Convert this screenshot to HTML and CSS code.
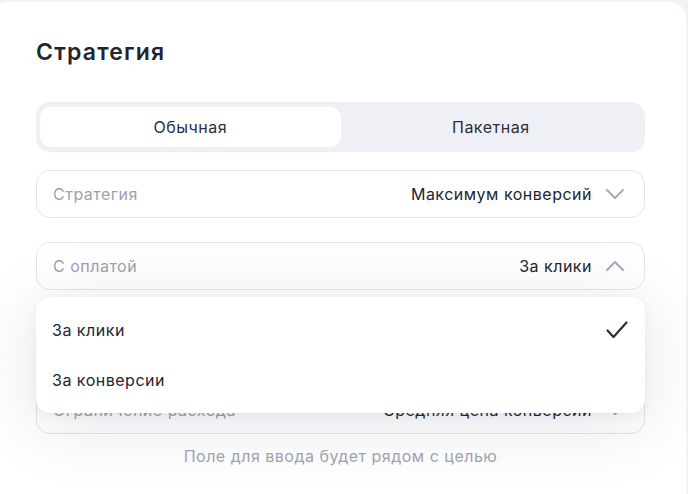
FILE: index.html
```html
<!DOCTYPE html>
<html lang="ru">
<head>
<meta charset="utf-8">
<title>Стратегия</title>
<link rel="stylesheet" href="styles.css">
</head>
<body>
<div class="card">
  <h1 class="title">Стратегия</h1>
  <div class="segmented">
    <div class="seg seg-active">Обычная</div>
    <div class="seg">Пакетная</div>
  </div>
  <div class="fields">
    <div class="field">
      <span class="label">Стратегия</span>
      <span class="value">Максимум конверсий</span>
      <svg class="chev" width="18" height="10" viewBox="0 0 18 10"><path d="M1 1l8 8 8-8" fill="none" stroke="currentColor" stroke-width="2" stroke-linecap="round" stroke-linejoin="round"/></svg>
    </div>
    <div class="field-wrap">
      <div class="field">
        <span class="label">С оплатой</span>
        <span class="value">За клики</span>
        <svg class="chev" width="18" height="10" viewBox="0 0 18 10"><path d="M1 9l8-8 8 8" fill="none" stroke="currentColor" stroke-width="2" stroke-linecap="round" stroke-linejoin="round"/></svg>
      </div>
      <div class="popup">
        <div class="opt"><span>За клики</span>
          <svg class="check" width="22" height="18" viewBox="0 0 22 18"><path d="M1.5 9.5l6 6.5L20.5 1.5" fill="none" stroke="currentColor" stroke-width="2.2" stroke-linecap="round" stroke-linejoin="round"/></svg>
        </div>
        <div class="opt"><span>За конверсии</span></div>
      </div>
    </div>
    <div class="field">
      <span class="label">Цель</span>
      <span class="value">Все цели</span>
      <svg class="chev" width="18" height="10" viewBox="0 0 18 10"><path d="M1 1l8 8 8-8" fill="none" stroke="currentColor" stroke-width="2" stroke-linecap="round" stroke-linejoin="round"/></svg>
    </div>
    <div class="field">
      <span class="label">Ограничение расхода</span>
      <span class="value">Средняя цена конверсии</span>
      <svg class="chev" width="18" height="10" viewBox="0 0 18 10"><path d="M1 1l8 8 8-8" fill="none" stroke="currentColor" stroke-width="2" stroke-linecap="round" stroke-linejoin="round"/></svg>
    </div>
  </div>
  <p class="hint">Поле для ввода будет рядом с целью</p>
</div>
</body>
</html>
```

FILE: styles.css
```css
* { box-sizing: border-box; }
html, body { margin: 0; padding: 0; }
body {
  background: #f1f2f6;
  font-family: Inter, "Noto Sans", sans-serif;
  color: #21252f;
  width: 688px;
  height: 494px;
  overflow: hidden;
  letter-spacing: 0.5px;
}
.card {
  margin: 2px 2px 0 -8px;
  padding: 34px 41px 0 44px;
  background: #ffffff;
  border-radius: 16px 16px 0 0;
  height: 492px;
}
.title {
  margin: 0;
  font-size: 23px;
  font-weight: 600;
  line-height: 32px;
  letter-spacing: 1.2px;
}
.segmented {
  margin-top: 34px;
  display: flex;
  padding: 5px 4px;
  background: #eff0f5;
  border-radius: 14px;
  height: 50px;
}
.seg {
  flex: 1;
  display: flex;
  align-items: center;
  justify-content: center;
  font-size: 16px;
  border-radius: 11px;
  color: #2a2e39;
}
.seg-active { background: #ffffff; }
.fields {
  margin-top: 18px;
  display: flex;
  flex-direction: column;
  gap: 24px;
}
.field-wrap { position: relative; }
.field {
  height: 48px;
  border: 1px solid #e3e5ec;
  border-radius: 14px;
  display: flex;
  align-items: center;
  padding: 0 20px 0 16px;
  font-size: 16px;
}
.label { color: #9ca2af; flex: 1; }
.value { color: #21252f; margin-right: 14px; }
.chev { color: #a6acb8; display: block; }
.popup {
  position: absolute;
  left: 0;
  right: 0;
  top: 55px;
  background: #ffffff;
  border-radius: 14px;
  padding: 8px 0;
  box-shadow: 0 10px 70px rgba(40, 50, 90, 0.13), 0 2px 8px rgba(40, 50, 90, 0.06);
  z-index: 2;
}
.opt {
  height: 50px;
  display: flex;
  align-items: center;
  justify-content: space-between;
  padding: 0 17px 0 16px;
  font-size: 16px;
  color: #21252f;
}
.check { color: #2a2e39; display: block; }
.hint {
  margin: 12px 0 0;
  text-align: center;
  font-size: 16px;
  color: #a1a6b2;
  line-height: 20px;
}
```
